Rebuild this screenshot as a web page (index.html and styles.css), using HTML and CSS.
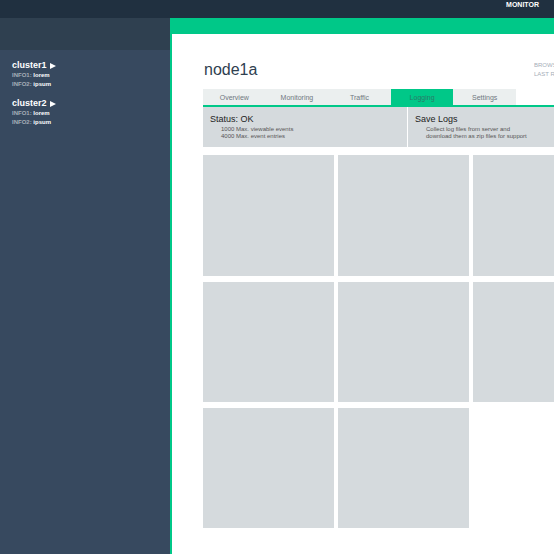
FILE: index.html
```
<!DOCTYPE html>
<html lang="en">
<head>
<meta charset="utf-8">
<title>node1a</title>
<link rel="stylesheet" href="styles.css">
</head>
<body>
<header class="topbar"><a class="topbar-link" href="#">MONITOR</a></header>
<div class="shell">
  <aside class="sidebar">
    <div class="sidebar-head"></div>
    <nav class="clusters">
      <section class="cluster">
        <h2 class="cluster-name"><a href="#">cluster1 <svg class="arrow" viewBox="0 0 6 6" aria-hidden="true"><path d="M0 0L6 3L0 6Z"/></svg></a></h2>
        <p>INFO1: <b>lorem</b></p>
        <p>INFO2: <b>ipsum</b></p>
      </section>
      <section class="cluster">
        <h2 class="cluster-name"><a href="#">cluster2 <svg class="arrow" viewBox="0 0 6 6" aria-hidden="true"><path d="M0 0L6 3L0 6Z"/></svg></a></h2>
        <p>INFO1: <b>lorem</b></p>
        <p>INFO2: <b>ipsum</b></p>
      </section>
    </nav>
  </aside>
  <main class="main">
    <div class="content">
      <div class="heading">
        <h1>node1a</h1>
        <div class="meta"><p>BROWSER</p><p>LAST REFRESH</p></div>
      </div>
      <nav class="tabs">
        <a href="#">Overview</a>
        <a href="#">Monitoring</a>
        <a href="#">Traffic</a>
        <a class="active" href="#" aria-current="page">Logging</a>
        <a href="#">Settings</a>
      </nav>
      <div class="panel">
        <section class="panel-item">
          <h3>Status: OK</h3>
          <p>1000 Max. viewable events</p>
          <p>4000 Max. event entries</p>
        </section>
        <section class="panel-item">
          <h3>Save Logs</h3>
          <p>Collect log files from server and</p>
          <p>download them as zip files for support</p>
        </section>
      </div>
      <div class="tiles">
        <div class="tile"></div><div class="tile"></div><div class="tile"></div>
        <div class="tile"></div><div class="tile"></div><div class="tile"></div>
        <div class="tile"></div><div class="tile"></div>
      </div>
    </div>
  </main>
</div>
</body>
</html>
```
FILE: styles.css
```
* { box-sizing: border-box; }
body {
  margin: 0;
  min-height: 100vh;
  display: flex;
  flex-direction: column;
  overflow: hidden;
  background: #fff;
  font-family: "Liberation Sans", Arial, sans-serif;
}
h1, h2, h3, p { margin: 0; }
h1, h3 { font-weight: normal; }
a { color: inherit; text-decoration: none; }

.topbar {
  height: 18px;
  padding-right: 15px;
  background: #203040;
  color: #fff;
  font-size: 7px;
  font-weight: bold;
  line-height: 10px;
  text-align: right;
}

.shell { flex: 1; display: flex; }
.sidebar {
  flex: 0 0 172px;
  border-right: 2px solid #00c888;
  background: #37495f;
}
.sidebar-head { height: 32px; background: #2f4050; }
.clusters {
  display: flex;
  flex-direction: column;
  gap: 9px;
  padding: 10px 12px;
  color: #a5aeb8;
  font-size: 6px;
  font-weight: bold;
  line-height: 9px;
}
.cluster b { color: #fff; }
.cluster-name {
  color: #fff;
  font-size: 9px;
  line-height: 11px;
}
.cluster-name a { display: flex; align-items: center; gap: 3px; }
.arrow { width: 6px; height: 6px; fill: #fff; }

.main {
  flex: 1;
  min-width: 0;
  overflow: hidden;
  border-top: 16px solid #00c888;
}
.content { width: 409px; margin: 24px 0 0 31px; }
.heading {
  height: 31px;
  display: flex;
  justify-content: space-between;
}
.heading h1 {
  padding-left: 1px;
  color: #2f4050;
  font-size: 16px;
  line-height: 24px;
}
.meta {
  flex: 0 0 78px;
  padding-top: 3px;
  color: #a5aeb8;
  font-size: 6px;
  line-height: 9px;
}
.tabs {
  display: flex;
  padding-right: 96px;
  border-bottom: 2px solid #00c888;
}
.tabs a {
  flex: 1;
  height: 16px;
  background: #ebefef;
  color: #707880;
  font-size: 7px;
  line-height: 17px;
  text-align: center;
}
.tabs .active { background: #00c888; color: #2b7a68; }
.panel {
  display: grid;
  grid-template-columns: 1fr 1fr;
  gap: 1px;
}
.panel-item {
  height: 40px;
  padding: 6px 7px;
  background: #d5dadd;
  color: #555;
  font-size: 6px;
  line-height: 7px;
}
.panel-item h3 { color: #222; font-size: 9px; line-height: 13px; }
.panel-item p { padding-left: 11px; }
.tiles {
  display: grid;
  grid-template-columns: repeat(3, 131px);
  grid-template-rows: 121px 120px 120px;
  gap: 6px 4px;
  margin-top: 8px;
}
.tile { background: #d5dadd; }
```
